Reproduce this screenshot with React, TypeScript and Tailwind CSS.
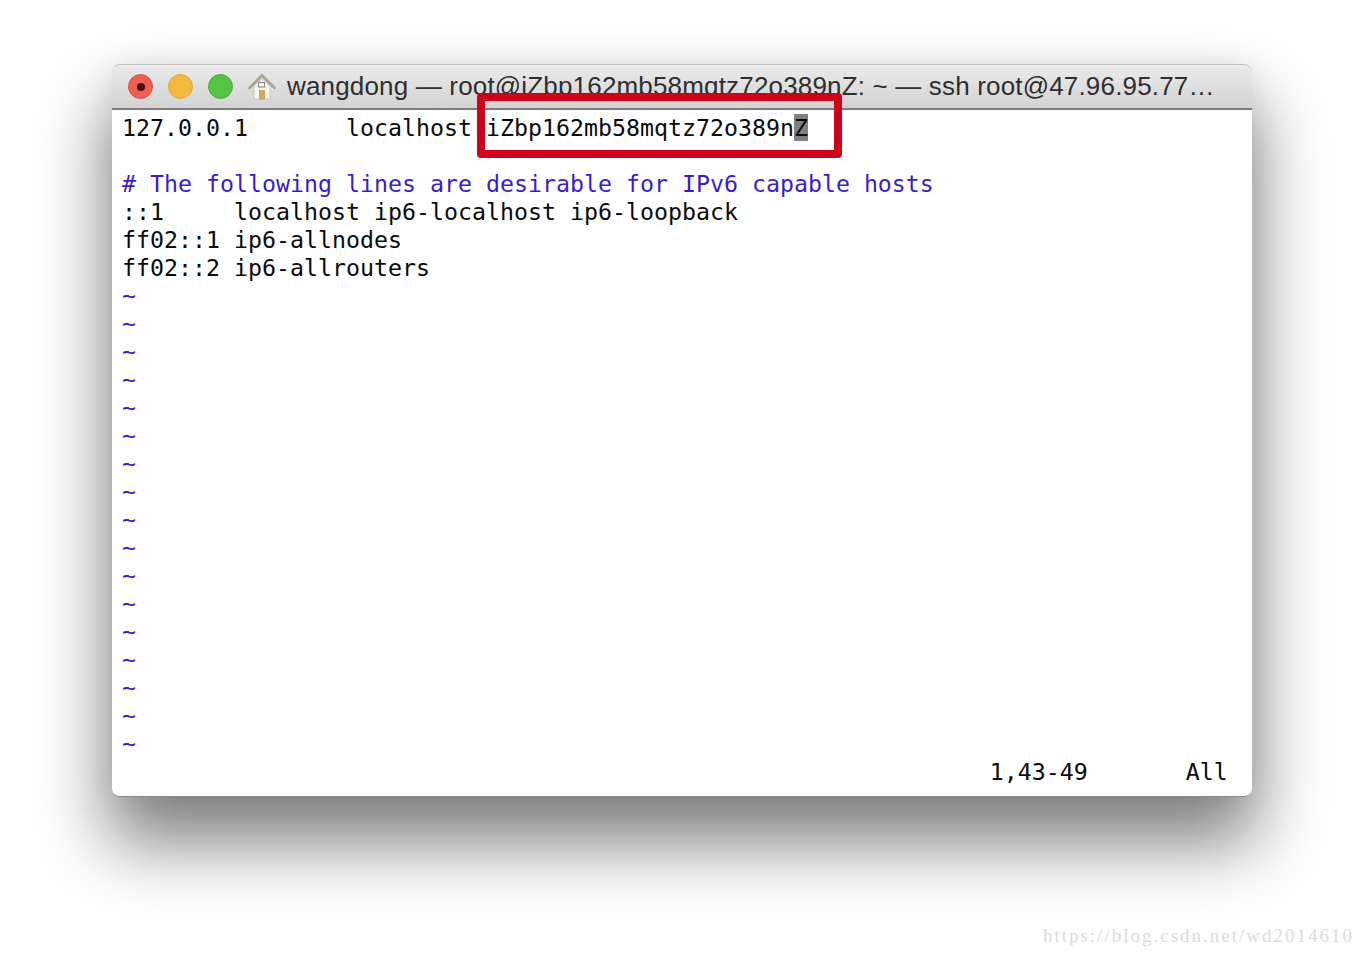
const MONO = "font-['DejaVu_Sans_Mono','Liberation_Mono',monospace]";

function Line({ children, blue }: { children?: React.ReactNode; blue?: boolean }) {
  return <div className={`h-[28px] leading-[28px] whitespace-pre ${blue ? "text-[#3a1ccb]" : "text-[#0a0a0a]"}`}>{children}</div>;
}

function HomeIcon() {
  return (
    <svg width="28" height="28" viewBox="0 0 28 28">
      <path d="M6 13v13h16V13L14 5.5z" fill="#f7f6f3" stroke="#c9c6bd" strokeWidth="1" />
      <path d="M1.500 15 14 2.500 26.500 15" fill="none" stroke="#a8a294" strokeWidth="2.600" strokeLinecap="round" strokeLinejoin="round" />
      <rect x="10.500" y="9.500" width="6" height="4.500" fill="#fff" stroke="#8d8a80" strokeWidth="1.200" />
      <rect x="11" y="17" width="6" height="9.500" fill="#d9a262" />
    </svg>
  );
}

export default function App() {
  const tildes = Array.from({ length: 17 });
  return (
    <div className="relative h-[956px] w-[1364px] overflow-hidden bg-white pl-[112px] pt-[64px]">
      <div className="relative flex h-[733px] w-[1140px] flex-col rounded-[8px] shadow-[0_42px_70px_4px_rgba(0,0,0,0.5),0_0_30px_rgba(0,0,0,0.06)]">
        <div className="flex h-[46px] items-center rounded-t-[8px] border-t border-b-2 border-t-[#c4c4c4] border-b-[#7d7d7d] bg-gradient-to-b from-[#ebebeb] to-[#d3d3d3] pl-[16px]">
          <div className="flex h-[25px] w-[25px] items-center justify-center rounded-full border border-[#d8504a] bg-[#ec5f57]">
            <div className="h-[8px] w-[8px] rounded-full bg-[#4d0b08]" />
          </div>
          <div className="ml-[15px] h-[25px] w-[25px] rounded-full border border-[#e0a63a] bg-[#f5b83f]" />
          <div className="ml-[15px] h-[25px] w-[25px] rounded-full border border-[#47ac3a] bg-[#54c345]" />
          <div className="ml-[15px] flex items-center"><HomeIcon /></div>
          <div className="ml-[11px] whitespace-nowrap font-['Liberation_Sans',sans-serif] text-[26px] tracking-[0.17px] text-[#2e2e2e]">
            wangdong — root@iZbp162mb58mqtz72o389nZ: ~ — ssh root@47.96.95.77…
          </div>
        </div>
        <div className={`flex-1 rounded-b-[8px] border-b border-[#8a8a8a] bg-white pl-[10px] pt-[4px] text-[23.25px] ${MONO}`}>
          <Line>
            {"127.0.0.1       localhost iZbp162mb58mqtz72o389n"}
            <span className="bg-[#808080]">Z</span>
          </Line>
          <Line />
          <Line blue># The following lines are desirable for IPv6 capable hosts</Line>
          <Line>{"::1     localhost ip6-localhost ip6-loopback"}</Line>
          <Line>ff02::1 ip6-allnodes</Line>
          <Line>ff02::2 ip6-allrouters</Line>
          {tildes.map((_, i) => (
            <Line key={i} blue>~</Line>
          ))}
          <Line>{" ".repeat(62) + "1,43-49       All"}</Line>
        </div>
        <div className="absolute left-[365px] top-[29px] h-[65px] w-[365px] rounded-[4px] border-[8px] border-[#d0021b]" />
      </div>
      <div className="absolute right-[10px] top-[925px] whitespace-nowrap font-['Liberation_Serif',serif] text-[19px] leading-[22px] tracking-[2px] text-[#dcdcdc]">
        https://blog.csdn.net/wd2014610
      </div>
    </div>
  );
}
